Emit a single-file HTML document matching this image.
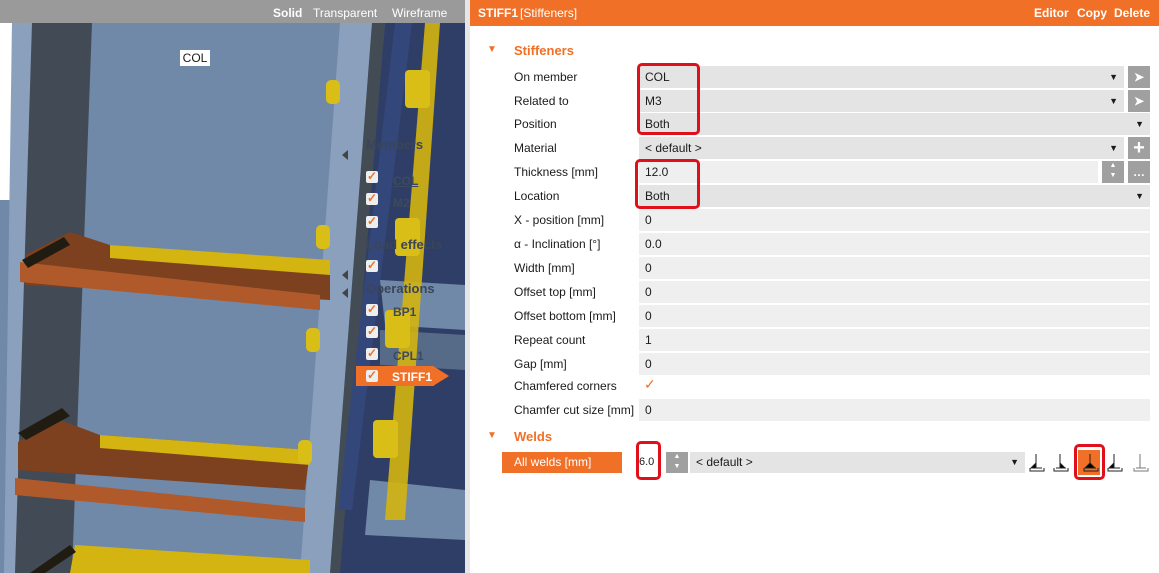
<!DOCTYPE html>
<html><head><meta charset="utf-8"><style>
*{margin:0;padding:0;box-sizing:border-box}
body{width:1159px;height:573px;overflow:hidden;background:#fff;font-family:"Liberation Sans",sans-serif;font-size:12px;color:#1a1a1a;position:relative}
.abs{position:absolute}
.lbl{position:absolute;left:514px;font-size:12px}
.fld{position:absolute;left:639px;height:22px;background:#e4e4e4;padding-left:6px;line-height:22px}
.dd::after{content:"▼";position:absolute;right:6px;top:0;font-size:9px}
.btn{position:absolute;width:22px;height:22px;background:#a0a0a0;color:#fff;text-align:center;line-height:22px;font-weight:bold}
.red{position:absolute;border:3px solid #e0101a;border-radius:5px}
.cb{position:absolute;left:366px;width:12px;height:12px;background:#eee;border-radius:2px;color:#f07027;font-size:12px;line-height:11px;font-weight:bold;text-align:center}
.tl{position:absolute;left:393px;color:#3d4a5e;font-weight:bold;font-size:12px}
</style></head><body>
<div class="abs" style="left:0;top:0;width:465px;height:573px;background:#7189a8;overflow:hidden">
<svg width="465" height="573" class="abs" style="left:0;top:0">
<rect x="0" y="23" width="465" height="550" fill="#7189a8"/>
<polygon points="0,23 12,23 10,573 0,573" fill="#fff"/>
<polygon points="0,200 10,200 8,573 0,573" fill="#7189a8"/>
<polygon points="12,23 32,23 24,573 4,573" fill="#8aa0bc"/>
<polygon points="32,23 92,23 72,573 15,573" fill="#414a55"/>
<polygon points="340,23 372,23 330,573 300,573" fill="#8aa0bc"/>
<polygon points="372,23 385,23 345,573 330,573" fill="#434b55"/>
<polygon points="385,23 465,23 465,573 340,573" fill="#2f3e66"/>
<polygon points="395,23 412,23 352,510 338,510" fill="#34477a"/>
<polygon points="380,280 465,285 465,330 385,325" fill="#7189a8"/>
<polygon points="380,330 465,335 465,370 380,365" fill="#566b88"/>
<polygon points="370,480 465,490 465,540 365,535" fill="#7189a8"/>
<polygon points="425,23 440,23 405,520 385,520" fill="#d4b410" opacity=".9"/>
<polygon points="25,255 70,232 110,245 330,262 330,300 25,285" fill="#7d4120"/>
<polygon points="110,245 330,260 330,275 110,258" fill="#d4b410"/>
<polygon points="20,262 320,295 320,310 20,282" fill="#b05a2c"/>
<polygon points="22,260 64,237 70,245 28,268" fill="#201c12"/>
<polygon points="18,442 60,420 100,435 310,450 305,490 18,470" fill="#7d4120"/>
<polygon points="100,435 310,450 310,465 100,448" fill="#d4b410"/>
<polygon points="15,478 305,508 305,522 15,495" fill="#b05a2c"/>
<polygon points="18,433 62,408 70,416 26,440" fill="#201c12"/>
<polygon points="75,545 310,560 310,573 70,573" fill="#d4b410"/>
<polygon points="30,573 70,545 76,552 45,573" fill="#201c12"/>
<g fill="#d9be18"><rect x="326" y="80" width="14" height="24" rx="5"/><rect x="316" y="225" width="14" height="24" rx="5"/><rect x="306" y="328" width="14" height="24" rx="5"/><rect x="298" y="440" width="14" height="24" rx="5"/>
<rect x="405" y="70" width="25" height="38" rx="4"/><rect x="395" y="218" width="25" height="38" rx="4"/><rect x="385" y="310" width="25" height="38" rx="4"/><rect x="373" y="420" width="25" height="38" rx="4"/></g>
<g fill="#444"><polygon points="342,155 348,150 348,160"/><polygon points="342,275 348,270 348,280"/><polygon points="342,291 348,286 348,296" transform="translate(0,2)"/></g>
</svg>
<div class="abs" style="left:0;top:0;width:465px;height:23px;background:#9a9a9a;color:#fff;font-size:12px;line-height:26px">
<span class="abs" style="left:273px;font-weight:bold">Solid</span><span class="abs" style="left:313px">Transparent</span><span class="abs" style="left:392px">Wireframe</span></div>
<div class="abs" style="left:180px;top:50px;width:30px;height:16px;background:#fff;font-size:12px;line-height:16px;text-align:center">COL</div>
<div class="tl" style="left:366px;top:137px;font-size:13px;color:#3a4558">Members</div>
<div class="tl" style="top:174px;text-decoration:underline">COL</div>
<div class="tl" style="top:196px">M2</div>
<div class="tl" style="left:366px;top:216px;font-size:13px;color:#3a4558;display:none">M3</div>
<div class="tl" style="left:366px;top:237px;font-size:13px;color:#3a4558">Load effects</div>
<div class="tl" style="left:366px;top:281px;font-size:13px;color:#3a4558">Operations</div>
<div class="cb" style="top:171px">✓</div><div class="cb" style="top:193px">✓</div><div class="cb" style="top:216px">✓</div>
<div class="cb" style="top:260px">✓</div><div class="cb" style="top:304px">✓</div><div class="cb" style="top:326px">✓</div><div class="cb" style="top:348px">✓</div>
<div class="abs" style="left:356px;top:366px;width:78px;height:20px;background:#f07027"></div>
<svg class="abs" style="left:433px;top:366px" width="16" height="20"><polygon points="0,0 16,10 0,20" fill="#f07027"/></svg>
<div class="cb" style="top:370px">✓</div>
<div class="abs" style="left:392px;top:369px;color:#fff;font-weight:bold;font-size:12px;line-height:16px">STIFF1</div>
<div class="tl" style="top:305px">BP1</div>
<div class="tl" style="top:349px">CPL1</div>
</div>
<div class="abs" style="left:465px;top:0;width:5px;height:573px;background:#e6e6e6"></div>
<div class="abs" style="left:470px;top:0;width:689px;height:26px;background:#f07027;color:#fff;line-height:27px;font-size:12px">
<span class="abs" style="left:8px;font-weight:bold">STIFF1</span><span class="abs" style="left:50px">[Stiffeners]</span>
<span class="abs" style="left:564px;font-weight:bold">Editor</span><span class="abs" style="left:607px;font-weight:bold">Copy</span><span class="abs" style="left:644px;font-weight:bold">Delete</span></div>
<div class="abs" style="left:487px;top:44px;color:#f07027;font-size:10px">▼</div>
<div class="abs" style="left:514px;top:43px;color:#f07027;font-weight:bold;font-size:13px">Stiffeners</div>
<div class="lbl" style="top:70px">On member</div><div class="fld dd" style="top:66px;width:485px">COL</div><div class="btn" style="left:1128px;top:66px">➤</div>
<div class="lbl" style="top:94px">Related to</div><div class="fld dd" style="top:90px;width:485px">M3</div><div class="btn" style="left:1128px;top:90px">➤</div>
<div class="lbl" style="top:117px">Position</div><div class="fld dd" style="top:113px;width:511px">Both</div>
<div class="lbl" style="top:141px">Material</div><div class="fld dd" style="top:137px;width:485px">&lt; default &gt;</div><div class="btn" style="left:1128px;top:137px;font-size:20px">+</div>
<div class="lbl" style="top:165px">Thickness [mm]</div><div class="fld" style="top:161px;width:459px;background:#efefef">12.0</div><div class="btn" style="left:1102px;top:161px;font-size:7px;line-height:10px">▲<br>▼</div><div class="btn" style="left:1128px;top:161px">…</div>
<div class="lbl" style="top:189px">Location</div><div class="fld dd" style="top:185px;width:511px">Both</div>
<div class="lbl" style="top:213px">X - position [mm]</div><div class="fld" style="top:209px;width:511px;background:#efefef">0</div>
<div class="lbl" style="top:237px">α - Inclination [°]</div><div class="fld" style="top:233px;width:511px;background:#efefef">0.0</div>
<div class="lbl" style="top:261px">Width [mm]</div><div class="fld" style="top:257px;width:511px;background:#efefef">0</div>
<div class="lbl" style="top:285px">Offset top [mm]</div><div class="fld" style="top:281px;width:511px;background:#efefef">0</div>
<div class="lbl" style="top:309px">Offset bottom [mm]</div><div class="fld" style="top:305px;width:511px;background:#efefef">0</div>
<div class="lbl" style="top:333px">Repeat count</div><div class="fld" style="top:329px;width:511px;background:#efefef">1</div>
<div class="lbl" style="top:357px">Gap [mm]</div><div class="fld" style="top:353px;width:511px;background:#efefef">0</div>
<div class="lbl" style="top:379px">Chamfered corners</div><div class="abs" style="left:644px;top:376px;color:#f07027;font-size:14px">✓</div>
<div class="lbl" style="top:403px">Chamfer cut size [mm]</div><div class="fld" style="top:399px;width:511px;background:#efefef">0</div>
<div class="abs" style="left:487px;top:430px;color:#f07027;font-size:10px">▼</div>
<div class="abs" style="left:514px;top:429px;color:#f07027;font-weight:bold;font-size:13px">Welds</div>
<div class="abs" style="left:502px;top:452px;width:120px;height:21px;background:#f07027;color:#fff;line-height:21px;padding-left:12px">All welds [mm]</div>
<div class="abs" style="left:639px;top:452px;width:20px;height:21px;line-height:21px;font-size:11px">6.0</div>
<div class="btn" style="left:666px;top:452px;height:21px;font-size:7px;line-height:10px">▲<br>▼</div>
<div class="fld dd" style="left:690px;top:452px;width:335px;height:21px;line-height:21px">&lt; default &gt;</div>
<div class="abs" style="left:1078px;top:450px;width:22px;height:25px;background:#f07027"></div>
<svg class="abs" style="left:1028px;top:450px" width="130" height="25" fill="none" stroke="#222" stroke-width="1">
<g><path d="M8 4v14M4 18h10M2 18v3h14v-3"/><path d="M3 18l5-5v5z" fill="#000"/></g>
<g transform="translate(24 0)"><path d="M8 4v14M4 18h10M2 18v3h14v-3"/><path d="M13 18l-5-5v5z" fill="#000"/></g>
<g transform="translate(52 0)"><path d="M10 4v14M6 18h10M4 18v3h14v-3"/><path d="M5 18l5-5 5 5z" fill="#000"/></g>
<g transform="translate(78 0)"><path d="M8 4v14M4 18h10M2 18v3h14v-3"/><path d="M3 18l5-5v5z" fill="#000"/></g>
<g transform="translate(104 0)" stroke="#777"><path d="M8 4v14M4 18h10M2 18v3h14v-3"/></g>
</svg>
<div class="red" style="left:637px;top:63px;width:63px;height:72px"></div>
<div class="red" style="left:635px;top:159px;width:65px;height:50px"></div>
<div class="red" style="left:636px;top:441px;width:25px;height:39px"></div>
<div class="red" style="left:1074px;top:444px;width:31px;height:36px"></div>
</body></html>
